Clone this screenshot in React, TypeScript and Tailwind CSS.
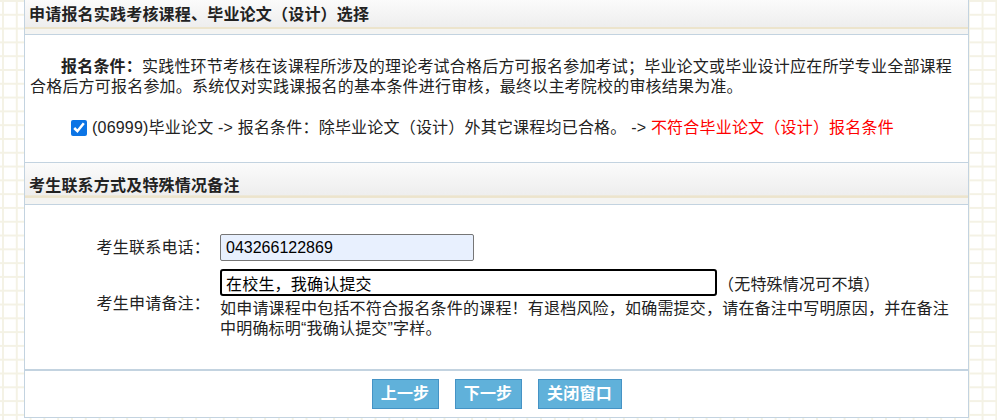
import React from 'react';

const font = "font-['Liberation_Sans','Noto_Sans_CJK_SC',sans-serif]";

function SectionHeader({ title, className = '' }: { title: string; className?: string }) {
  return (
    <div
      className={`bg-[linear-gradient(to_bottom,#fbfbfb,#eeeeee_78%,#ece4cc_80%,#ece4cc_84%,#f4f4f2_86%,#f4f4f2)] text-[16px] font-bold leading-[20px] text-[#222] pl-[4px] ${className}`}
    >
      {title}
    </div>
  );
}

export default function App() {
  return (
    <div
      className={`h-[420px] w-full overflow-hidden bg-white bg-[linear-gradient(to_right,#f4f2e5_2px,transparent_2px),linear-gradient(to_bottom,#f4f2e5_2px,transparent_2px)] bg-[length:13.8px_13.8px] bg-[position:2px_0] ${font}`}
    >
      <div className="ml-[24px] w-[945px] border-x border-[#c3d3e0] bg-white text-[16px] leading-[20px] tracking-[0.2px] text-[#222]">
        <SectionHeader
          title="申请报名实践考核课程、毕业论文（设计）选择"
          className="h-[35px] pt-[5px] border-b border-[#c3d3e0]"
        />

        <div className="h-[127px] pt-[22px] pl-[5px] pr-[14px]">
          <p className="indent-[31px]">
            <b>报名条件：</b>实践性环节考核在该课程所涉及的理论考试合格后方可报名参加考试；毕业论文或毕业设计应在所学专业全部课程合格后方可报名参加。系统仅对实践课报名的基本条件进行审核，最终以主考院校的审核结果为准。
          </p>
          <div className="mt-[21px] ml-[41px] flex items-center gap-[5px]">
            <input type="checkbox" defaultChecked className="m-0 h-[16px] w-[16px] accent-[#0b74e5]" />
            <span>
              (06999)毕业论文 -&gt; 报名条件：除毕业论文（设计）外其它课程均已合格。 -&gt;{' '}
              <span className="text-[#ff0000]">不符合毕业论文（设计）报名条件</span>
            </span>
          </div>
        </div>

        <SectionHeader
          title="考生联系方式及特殊情况备注"
          className="h-[43px] pt-[13px] border-y border-[#c3d3e0]"
        />

        <div className="pt-[29px] pb-[30px]">
          <div className="grid grid-cols-[185px_1fr] gap-x-[10px] gap-y-[8px] items-center">
            <div className="text-right">考生联系电话：</div>
            <div>
              <input
                type="text"
                defaultValue="043266122869"
                className="h-[27px] w-[254px] rounded-[2px] border border-[#767676] bg-[#e8f0fe] px-[5px] text-[16px] tracking-normal text-black outline-none"
              />
            </div>

            <div className="text-right">考生申请备注：</div>
            <div>
              <div className="flex items-center gap-[1px]">
                <input
                  type="text"
                  defaultValue="在校生，我确认提交"
                  className="h-[27px] w-[497px] rounded-[3px] border-2 border-black bg-white px-[4px] text-[16px] text-black outline-none"
                />
                <span className="pt-[4px]">（无特殊情况可不填）</span>
              </div>
              <p className="mt-[3px] w-[740px]">
                如申请课程中包括不符合报名条件的课程！有退档风险，如确需提交，请在备注中写明原因，并在备注中明确标明“我确认提交”字样。
              </p>
            </div>
          </div>
        </div>

        <div className="flex justify-center gap-[16px] border-t-2 border-b border-[#c3d3e0] pt-[8px] pb-[8px]">
          <button className="h-[30px] w-[67px] border border-[#4593c5] bg-[#60b1da] text-[16px] font-bold text-white">上一步</button>
          <button className="h-[30px] w-[67px] border border-[#4593c5] bg-[#60b1da] text-[16px] font-bold text-white">下一步</button>
          <button className="h-[30px] w-[84px] border border-[#4593c5] bg-[#60b1da] text-[16px] font-bold text-white">关闭窗口</button>
        </div>
      </div>
    </div>
  );
}
